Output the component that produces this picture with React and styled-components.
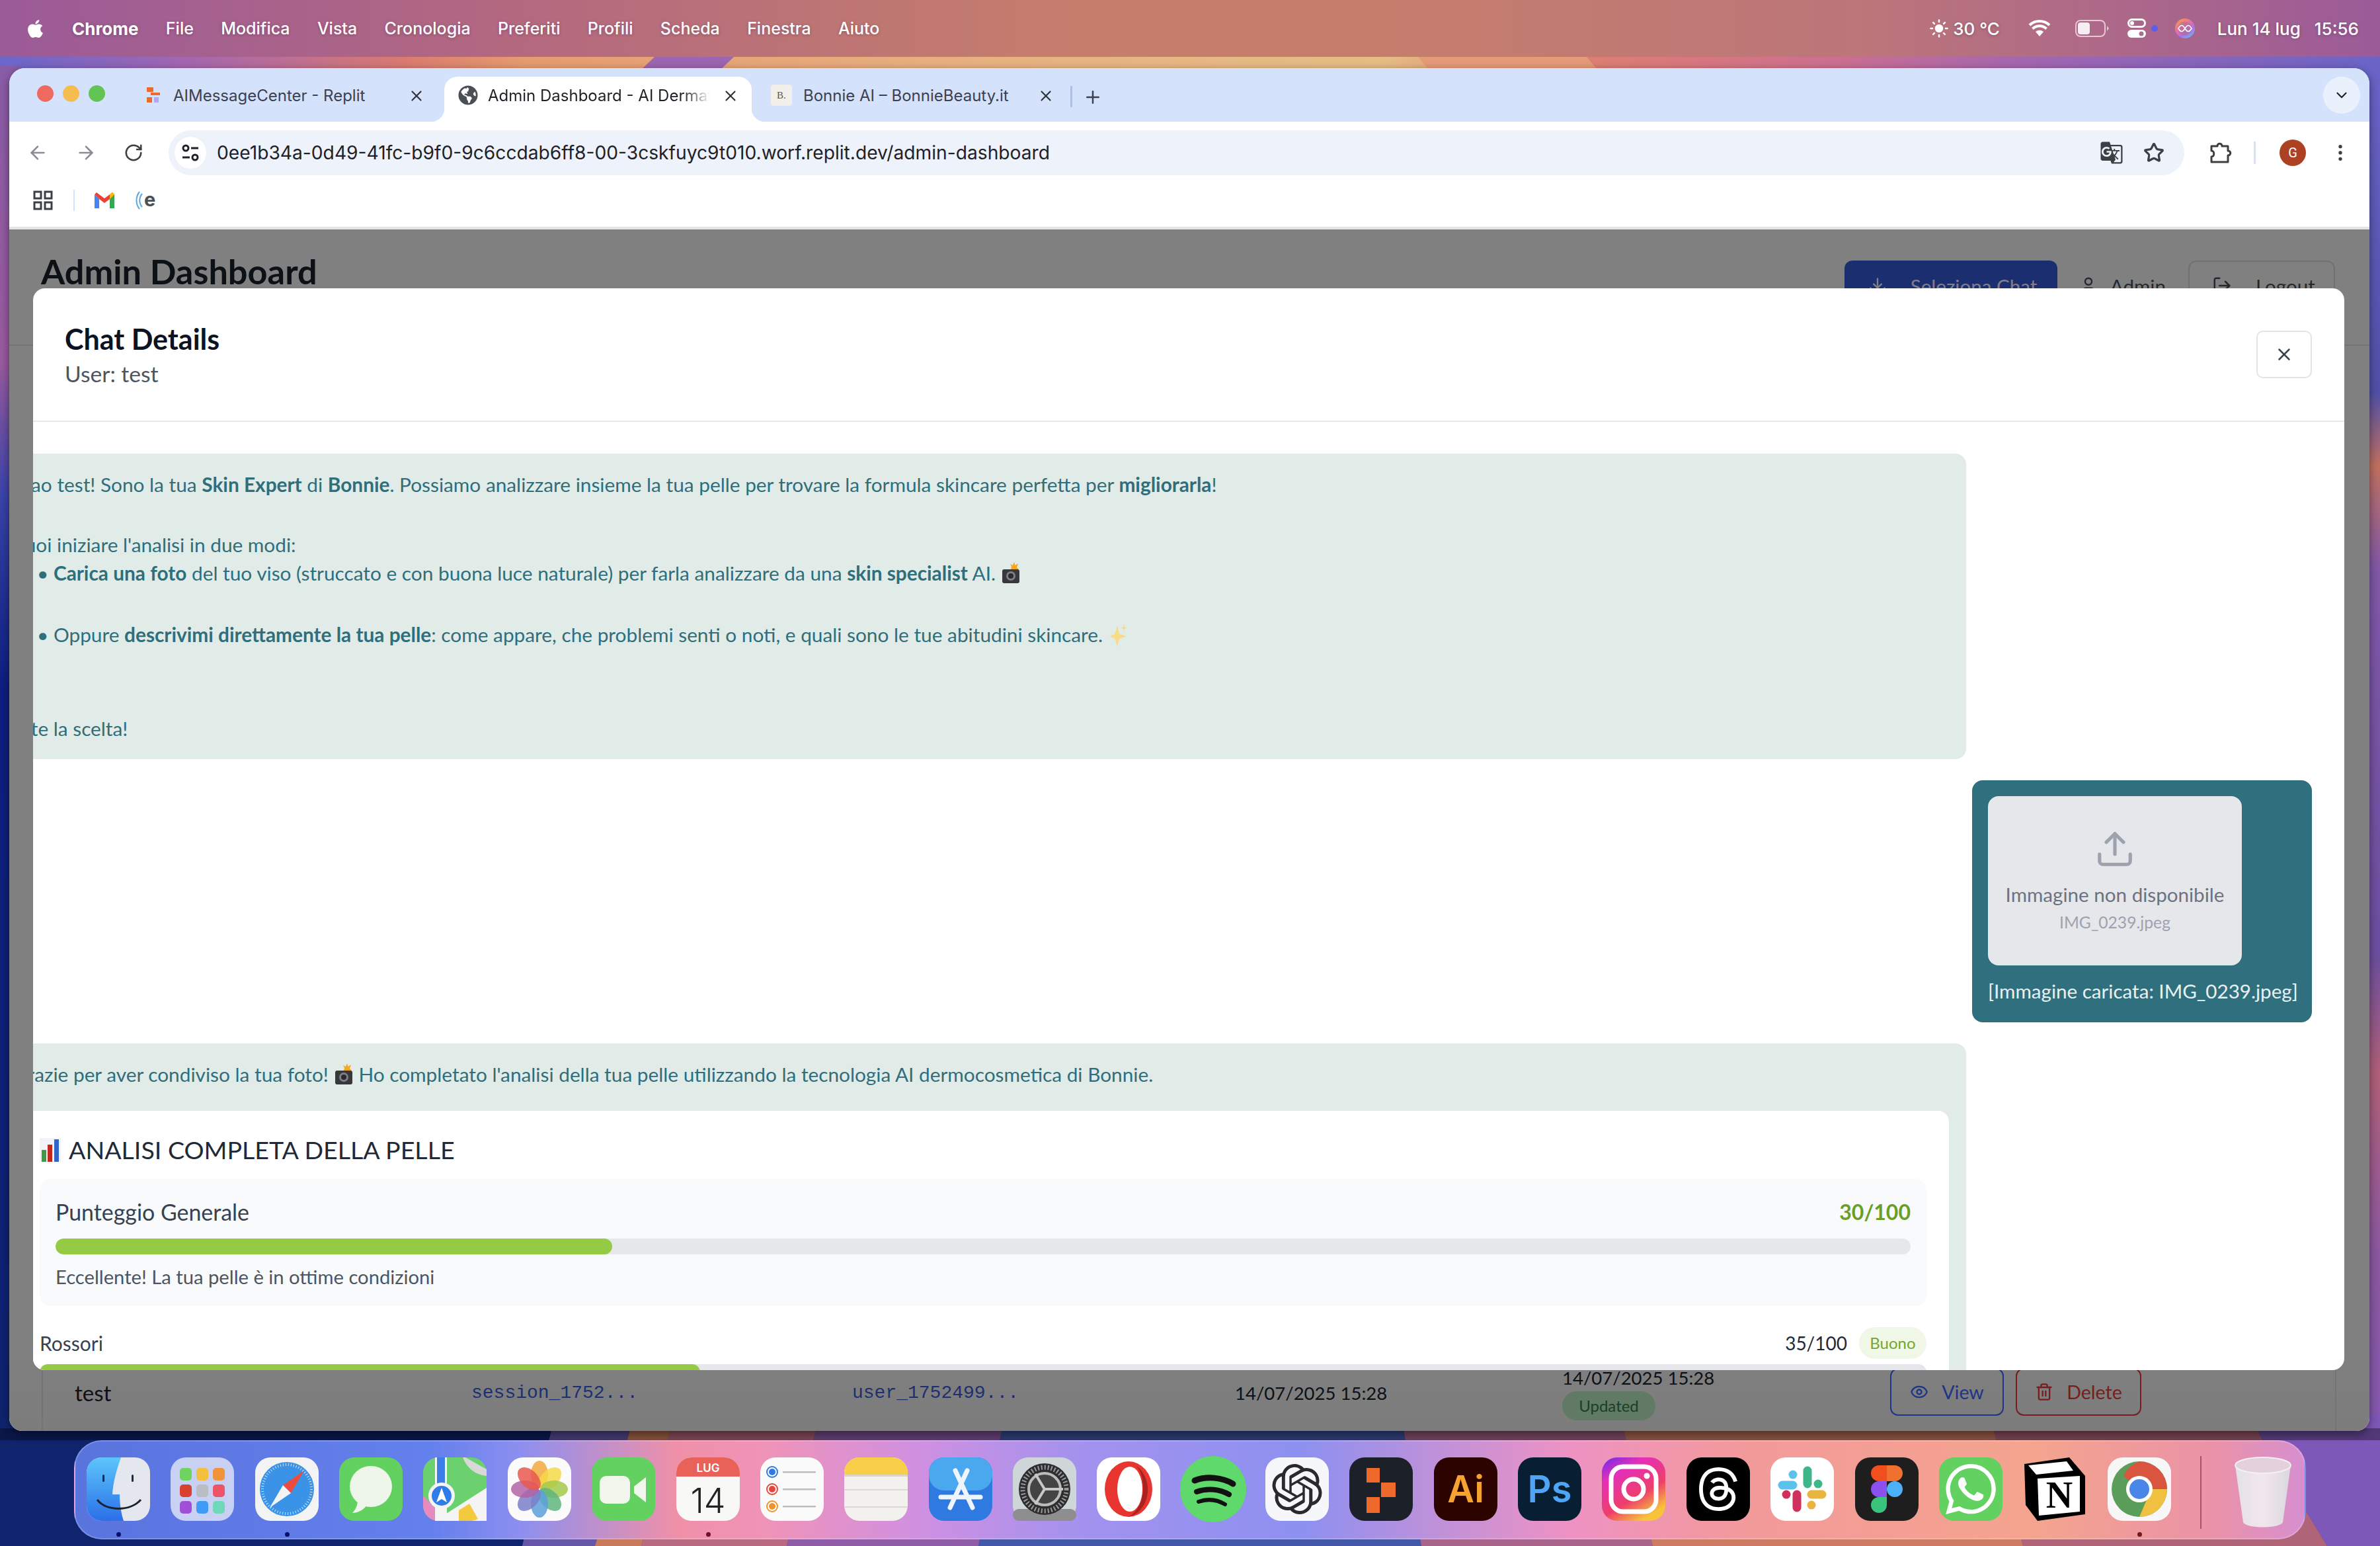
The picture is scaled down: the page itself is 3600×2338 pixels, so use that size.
import React from "react";
import styled, { createGlobalStyle } from "styled-components";
import {
  ArrowLeft, ArrowRight, RotateCw, Star, MoreVertical, ChevronDown, Plus, X, Upload,
  Download, User, LogOut, Eye, Trash2, Sun,
} from "lucide-react";
import { FaApple, FaGlobeAmericas } from "react-icons/fa";
import { MdGTranslate } from "react-icons/md";
import { SiOpenai, SiThreads, SiWhatsapp } from "react-icons/si";

const UI = '"Inter", "Liberation Sans", sans-serif';
const APP = '"Lato", "Noto Sans", sans-serif';

const Global = createGlobalStyle`
  html, body { margin: 0; padding: 0; width: 3600px; height: 2338px; overflow: hidden; }
  * { box-sizing: border-box; }
`;

const Desktop = styled.div`
  position: relative;
  width: 3600px;
  height: 2338px;
  overflow: hidden;
  display: flex;
  flex-direction: column;
  font-family: ${APP};
`;
const Wallpaper = styled.svg`
  position: absolute;
  left: 0;
  top: 0;
`;

/* menu bar */
const MenuBar = styled.div`
  position: relative;
  height: 86px;
  flex: none;
  display: flex;
  align-items: center;
  padding: 0 32px 0 38px;
  color: #fff;
  font-family: ${UI};
  font-size: 25px;
  font-weight: 500;
  background: linear-gradient(90deg, #9b5b98 0%, #b4697f 22%, #c57e6c 45%, #c57e6c 58%, #bd7679 78%, #9b5b98 100%);
  text-shadow: 0 1px 4px rgba(60, 20, 60, 0.35);
`;
const MenuItems = styled.div`
  display: flex;
  align-items: center;
  gap: 41.3px;
  margin-left: 40px;
`;
const MenuLabel = styled.span`
  font-weight: ${(p) => (p.$bold ? 700 : 500)};
  font-size: ${(p) => (p.$bold ? 26 : 25)}px;
`;
const StatusArea = styled.div`
  margin-left: auto;
  display: flex;
  align-items: center;
  font-size: 26px;
`;
const StatusText = styled.span`
  margin-left: ${(p) => p.$ml || 0}px;
`;
const StatusIcon = styled.svg`
  display: block;
  margin-left: ${(p) => p.$ml || 0}px;
`;

/* browser window */
const Browser = styled.div`
  position: relative;
  flex: none;
  width: 3570px;
  height: 2061px;
  margin: 17px 0 0 14px;
  border-radius: 24px 24px 20px 20px;
  overflow: hidden;
  display: flex;
  flex-direction: column;
  background: #fff;
  box-shadow: 0 4px 14px rgba(0, 0, 0, 0.45);
`;
const TabStrip = styled.div`
  height: 81px;
  flex: none;
  display: flex;
  align-items: flex-end;
  background: #d5e2fb;
  padding-left: 42px;
  font-family: ${UI};
  font-size: 24px;
  color: #3b4150;
`;
const Light = styled.span`
  width: 25px;
  height: 25px;
  border-radius: 50%;
  margin-right: 14px;
  align-self: center;
  margin-top: -4px;
  background: ${(p) => p.$c};
`;
const Tab = styled.div`
  position: relative;
  display: flex;
  align-items: center;
  height: 68px;
  width: ${(p) => p.$w}px;
  margin-left: ${(p) => p.$ml || 0}px;
  padding: 0 0 12px ${(p) => p.$pl}px;
  border-radius: 20px 20px 0 0;
  background: ${(p) => (p.$active ? "#fff" : "transparent")};
  color: ${(p) => (p.$active ? "#1f2127" : "#3b4150")};
  ${(p) =>
    p.$active &&
    `
    &::before, &::after {
      content: "";
      position: absolute;
      bottom: 0;
      width: 20px;
      height: 20px;
    }
    &::before { left: -20px; background: radial-gradient(circle at 0 0, transparent 20px, #fff 20.5px); }
    &::after { right: -20px; background: radial-gradient(circle at 100% 0, transparent 20px, #fff 20.5px); }
  `}
`;
const TabTitle = styled.span`
  margin-left: ${(p) => p.$ml}px;
  width: ${(p) => p.$w}px;
  white-space: nowrap;
  overflow: hidden;
  ${(p) => p.$fade && "-webkit-mask-image: linear-gradient(90deg, #000 88%, transparent 100%);"}
`;
const TabClose = styled.span`
  position: absolute;
  right: ${(p) => p.$r}px;
  top: 16px;
  display: flex;
  color: #2f323a;
`;
const TabSep = styled.span`
  width: 3px;
  height: 32px;
  background: #a9c0ec;
  margin: 0 0 22px 8px;
`;
const NewTab = styled.span`
  display: flex;
  margin: 0 0 22px 16px;
  color: #3b4150;
`;
const TabMenu = styled.span`
  margin: 0 14px 12px auto;
  width: 56px;
  height: 56px;
  border-radius: 50%;
  background: #ebf1fc;
  display: flex;
  align-items: center;
  justify-content: center;
  color: #1f2127;
`;
const FaviconB = styled.span`
  width: 32px;
  height: 32px;
  border-radius: 4px;
  background: #f3f0ec;
  display: flex;
  align-items: center;
  justify-content: center;
  font-family: "Liberation Serif", serif;
  font-size: 15px;
  color: #555;
`;
const Toolbar = styled.div`
  height: 81px;
  flex: none;
  display: flex;
  align-items: center;
  background: #fff;
  padding: 12px 0 0 23px;
  color: #6c6f75;
`;
const NavBtn = styled.span`
  display: flex;
  width: 40px;
  margin-right: ${(p) => p.$mr}px;
  justify-content: center;
  color: ${(p) => p.$c || "#8a8d92"};
`;
const Omnibox = styled.div`
  width: 3049px;
  height: 68px;
  border-radius: 34px;
  background: #edf2fb;
  display: flex;
  align-items: center;
  padding: 0 30px 0 9px;
  font-family: ${UI};
  font-size: 28.2px;
  color: #1f2127;
`;
const SiteInfo = styled.span`
  width: 48px;
  height: 48px;
  border-radius: 50%;
  background: #fff;
  display: flex;
  align-items: center;
  justify-content: center;
  margin-right: 16px;
  flex: none;
`;
const Url = styled.span`
  flex: 1;
  white-space: nowrap;
`;
const OmniIcon = styled.span`
  display: flex;
  margin-left: ${(p) => p.$ml}px;
  color: #3c4043;
`;
const ToolEnd = styled.div`
  display: flex;
  align-items: center;
  color: #3c4043;
`;
const ToolSep = styled.span`
  width: 3px;
  height: 34px;
  background: #d5e2fb;
  margin: 0 36px 0 33px;
`;
const Avatar = styled.span`
  width: 40px;
  height: 40px;
  border-radius: 50%;
  background: #ad4123;
  color: #fff;
  font-family: "Roboto", sans-serif;
  font-size: 20px;
  display: flex;
  align-items: center;
  justify-content: center;
`;
const Kebab = styled.span`
  display: flex;
  margin-left: 36px;
`;
const Bookmarks = styled.div`
  height: 82px;
  flex: none;
  display: flex;
  align-items: center;
  padding: 0 0 2px 36px;
  background: #fff;
  border-bottom: 4px solid #e4e4e4;
`;
const BookmarkSep = styled.span`
  width: 2px;
  height: 32px;
  background: #d5e2fb;
  margin: 0 30px 0 31px;
`;
const BookmarkIcon = styled.svg`
  display: block;
  margin-left: ${(p) => p.$ml || 0}px;
`;

/* dimmed page */
const Page = styled.div`
  flex: 1;
  min-height: 0;
  display: flex;
  flex-direction: column;
  background: linear-gradient(180deg, #808080 0%, #808080 93%, #7b7c7b 100%);
`;
const PageHeader = styled.div`
  height: 176px;
  flex: none;
  display: flex;
  align-items: flex-start;
  padding: 31px 52px 0 48px;
  border-bottom: 2px solid #747474;
`;
const PageTitle = styled.h1`
  margin: 0;
  font-size: 52.3px;
  line-height: 64px;
  font-weight: 700;
  color: #0c1017;
`;
const HeaderActions = styled.div`
  margin: 16px 0 0 auto;
  display: flex;
  align-items: flex-start;
  font-size: 29.6px;
`;
const SelectChat = styled.div`
  width: 322px;
  height: 76px;
  border-radius: 12px;
  background: #1b2f70;
  color: #80808a;
  display: flex;
  align-items: center;
  padding-left: 36px;
  gap: 36px;
`;
const AdminLabel = styled.div`
  display: flex;
  align-items: center;
  height: 76px;
  gap: 18px;
  margin: 0 34px 0 32px;
  color: #25282e;
`;
const LogoutBtn = styled.div`
  width: 222px;
  height: 76px;
  border-radius: 12px;
  border: 2px solid #6f7072;
  display: flex;
  align-items: center;
  padding-left: 34px;
  gap: 36px;
  color: #25282e;
`;
const TableFrame = styled.div`
  margin: auto 50px 0 49px;
  height: 95px;
  border: solid #747474;
  border-width: 0 2px;
  display: grid;
  grid-template-columns: 600px 576px 579px 495px 496px 1fr;
  padding-left: 48px;
  align-items: start;
`;
const Username = styled.div`
  font-size: 33px;
  line-height: 74px;
  color: #0c1017;
`;
const Mono = styled.div`
  font-family: "Liberation Mono", monospace;
  font-size: 28px;
  line-height: 76px;
  color: #1d2f70;
`;
const DateCell = styled.div`
  font-size: 27.5px;
  line-height: 76px;
  color: #0c1017;
`;
const StatusCell = styled.div`
  margin-top: -5px;
  font-size: 27.5px;
  line-height: 40px;
  color: #0c1017;
`;
const UpdatedBadge = styled.span`
  display: block;
  width: 141px;
  height: 44px;
  border-radius: 22px;
  background: #607a66;
  color: #1b3e26;
  font-size: 24px;
  line-height: 44px;
  text-align: center;
`;
const RowActions = styled.div`
  display: flex;
  gap: 18px;
`;
const RowBtn = styled.div`
  width: ${(p) => p.$w}px;
  height: 72px;
  border: 2px solid ${(p) => p.$c};
  border-radius: 12px;
  color: ${(p) => p.$c};
  display: flex;
  align-items: center;
  justify-content: center;
  gap: 20px;
  font-size: 28.6px;
`;

/* modal */
const Modal = styled.div`
  position: absolute;
  left: 36px;
  top: 333px;
  width: 3496px;
  height: 1636px;
  border-radius: 18px;
  overflow: hidden;
  background: #fff;
  display: flex;
  flex-direction: column;
`;
const ModalHeader = styled.div`
  height: 202px;
  flex: none;
  display: flex;
  align-items: flex-start;
  justify-content: space-between;
  padding: 50px 49px 0 48px;
  border-bottom: 2px solid #e5e7eb;
`;
const ModalTitle = styled.h2`
  margin: 0;
  font-size: 43px;
  line-height: 54px;
  font-weight: 700;
  color: #0c1322;
`;
const ModalSub = styled.div`
  margin-top: 3px;
  font-size: 33.6px;
  line-height: 44px;
  color: #4b5563;
`;
const CloseBtn = styled.div`
  width: 84px;
  height: 72px;
  margin-top: 14px;
  border: 2px solid #e2e4e9;
  border-radius: 10px;
  display: flex;
  align-items: center;
  justify-content: center;
  color: #3c4350;
`;
const Messages = styled.div`
  flex: 1;
  min-height: 0;
  overflow: hidden;
  padding: 48px 49px 0 0;
  display: flex;
  flex-direction: column;
  gap: 32px;
`;
const BotBubble = styled.div`
  flex: none;
  width: 2978px;
  margin-left: -54px;
  height: ${(p) => p.$h || "auto"};
  padding: 26px 24px 0;
  border-radius: 16px;
  background: #e1ebe7;
  color: #2f6e7c;
  font-size: 29.8px;
  line-height: 42px;
  white-space: nowrap;
  b { font-weight: 700; }
`;
const Line = styled.div`
  margin-top: ${(p) => p.$mt || 0}px;
  padding-left: ${(p) => p.$pl || 0}px;
  display: flex;
  align-items: center;
  white-space: pre;
`;
const Emoji = styled.svg`
  margin-left: 8px;
  flex: none;
`;
const UserBubble = styled.div`
  flex: none;
  align-self: flex-end;
  width: 514px;
  height: 366px;
  padding: 24px;
  border-radius: 16px;
  background: #30707e;
  color: #e8f1f3;
  font-size: 29.6px;
  white-space: nowrap;
`;
const MissingImage = styled.div`
  width: 384px;
  height: 256px;
  border-radius: 16px;
  background: #e5e7eb;
  display: flex;
  flex-direction: column;
  align-items: center;
  padding-top: 49px;
  color: #9ca3af;
`;
const MissingTitle = styled.div`
  margin-top: 18px;
  font-size: 29.6px;
  line-height: 40px;
  color: #6b7280;
`;
const MissingFile = styled.div`
  margin-top: 6px;
  font-size: 24.7px;
  line-height: 32px;
  color: #9ca3af;
`;
const Caption = styled.div`
  margin-top: 16px;
  line-height: 46px;
`;
const AnalysisCard = styled.div`
  margin: 34px 0 0 0;
  width: 2928px;
  padding: 34px 34px 0 40px;
  border-radius: 16px;
  background: #fff;
`;
const CardTitle = styled.div`
  display: flex;
  align-items: center;
  gap: 12px;
  font-size: 37.6px;
  line-height: 50px;
  color: #1f2937;
`;
const ScoreBox = styled.div`
  margin-top: 19px;
  height: 192px;
  padding: 26px 24px 24px;
  border-radius: 16px;
  background: #f9fafb;
`;
const ScoreHead = styled.div`
  display: flex;
  align-items: center;
  justify-content: space-between;
  height: 48px;
  font-size: 33.9px;
  color: #374151;
`;
const ScoreValue = styled.span`
  font-size: 32px;
  font-weight: 700;
  color: #6a9f23;
`;
const Track = styled.div`
  height: ${(p) => p.$h}px;
  margin-top: ${(p) => p.$mt}px;
  border-radius: ${(p) => p.$h / 2}px;
  background: #e5e7eb;
  overflow: hidden;
`;
const Fill = styled.div`
  height: 100%;
  border-radius: inherit;
  background: #95cb44;
`;
const ScoreNote = styled.div`
  margin-top: 14px;
  font-size: 29.2px;
  line-height: 40px;
  color: #4b5563;
`;
const MetricRow = styled.div`
  margin-top: 32px;
  height: 48px;
  display: flex;
  align-items: center;
  font-size: 30px;
  color: #374151;
`;
const MetricValue = styled.span`
  margin-left: auto;
  font-size: 28px;
  color: #1f2937;
`;
const MetricBadge = styled.span`
  margin-left: 18px;
  width: 102px;
  height: 48px;
  border-radius: 24px;
  background: #f1f7e7;
  color: #73a72f;
  font-size: 24px;
  line-height: 48px;
  text-align: center;
`;

/* dock */
const Dock = styled.div`
  flex: none;
  position: relative;
  width: 3376px;
  height: 150px;
  margin: 14px 0 0 112px;
  border-radius: 42px;
  padding: 22px 0 0 15px;
  display: flex;
  gap: 27.37px;
  border: 2px solid rgba(255, 255, 255, 0.2);
  background: linear-gradient(90deg, #5a74de 0%, #6480ec 16%, #8d8fef 20%, #f090a8 27%, #ef93b8 31%, #cf90e2 38%, #a392ee 45%, #8d90f0 55%, #ee92c4 67%, #f29a9a 75%, #f4a48e 88%, #ea92a8 96%, #d68fd0 100%);
`;
const DockItem = styled.div`
  position: relative;
  width: 100px;
  height: 100px;
  flex: none;
  &::after {
    content: "";
    display: ${(p) => (p.$running ? "block" : "none")};
    position: absolute;
    left: 47px;
    top: 115px;
    width: 7px;
    height: 7px;
    border-radius: 50%;
    background: ${(p) => p.$dot || "#0a0f6e"};
  }
`;
const DockSep = styled.span`
  width: 2px;
  height: 110px;
  margin: 0 16px 0 15px;
  background: rgba(120, 40, 60, 0.6);
`;

const Squircle = ({ fill, children }) => (
  <svg width="100" height="100" viewBox="0 0 100 100">
    <rect x="2" y="2" width="96" height="96" rx="23" fill={fill} />
    {children}
  </svg>
);

const Finder = () => (
  <Squircle fill="#e4e8ee">
    <defs>
      <linearGradient id="fnd" x1="0" y1="0" x2="0" y2="1">
        <stop offset="0" stopColor="#5cc6fb" /><stop offset="1" stopColor="#2c6fe8" />
      </linearGradient>
    </defs>
    <path d="M25 2H54C47 22 42 40 41 58H52C52 72 54 86 58 98H25A23 23 0 0 1 2 75V25A23 23 0 0 1 25 2Z" fill="url(#fnd)" />
    <rect x="26" y="28" width="3" height="11" rx="1.5" fill="#1a2a44" />
    <rect x="70" y="28" width="3" height="11" rx="1.5" fill="#1a2a44" />
    <path d="M18 66C32 84 68 84 84 66" fill="none" stroke="#1a2230" strokeWidth="3" />
  </Squircle>
);
const Launchpad = () => {
  const tiles = ["#6fd45f", "#f5bf3e", "#f0933a", "#d8402f", "#b9bcc0", "#ee5468", "#a24fd8", "#3f9bf5", "#6fd8b8"];
  return (
    <Squircle fill="#c8d0f4">
      {tiles.map((c, i) => (
        <rect key={c} x={16 + (i % 3) * 25} y={18 + Math.floor(i / 3) * 25} width="18" height="19" rx="5" fill={c} />
      ))}
    </Squircle>
  );
};
const Safari = () => (
  <Squircle fill="#f3f3f3">
    <circle cx="50" cy="50" r="41" fill="#3b93e8" />
    <circle cx="50" cy="50" r="37" fill="none" stroke="#cfe4f8" strokeWidth="4" strokeDasharray="1 3" />
    <path d="M76 22L56 56L44 44Z" fill="#ee4b3e" />
    <path d="M24 78L56 56L44 44Z" fill="#f4f4f4" />
  </Squircle>
);
const MessagesApp = () => (
  <Squircle fill="#62d160">
    <ellipse cx="50" cy="46" rx="32" ry="31" fill="#eef6ea" />
    <path d="M30 66C30 76 26 82 22 86C32 86 40 80 44 74Z" fill="#eef6ea" />
  </Squircle>
);
const Maps = () => (
  <Squircle fill="#6bd16e">
    <path d="M2 60L40 98H25A23 23 0 0 1 2 75Z" fill="#e88ac0" />
    <path d="M66 2L98 20V30C80 28 68 18 62 2Z" fill="#d8d8d8" />
    <path d="M20 98L98 48V98Z" fill="#f4f4f4" />
    <path d="M56 98H75A23 23 0 0 0 85 95L72 72L56 82Z" fill="#f5c93e" />
    <rect x="20" y="2" width="18" height="96" fill="#f4f4f4" />
    <rect x="23" y="2" width="12" height="50" fill="#3b7ee8" />
    <circle cx="30" cy="60" r="20" fill="#f4f4f4" />
    <circle cx="30" cy="60" r="15" fill="#2f7be8" />
    <path d="M30 48L38 70L30 65L22 70Z" fill="#fff" />
  </Squircle>
);
const Photos = () => {
  const petals = ["#f2a93c", "#f5d94a", "#a3c94b", "#5fb57c", "#5aa0d8", "#7b7fc8", "#b163a8", "#e8584f"];
  return (
    <Squircle fill="#fbfbfb">
      {petals.map((c, i) => (
        <ellipse key={c} cx="50" cy="28" rx="13" ry="21" fill={c} opacity="0.85" transform={`rotate(${i * 45} 50 50)`} />
      ))}
    </Squircle>
  );
};
const FaceTime = () => (
  <Squircle fill="#62d160">
    <rect x="14" y="30" width="46" height="42" rx="10" fill="#f0f6ec" />
    <path d="M66 46L84 32V70L66 56Z" fill="#f0f6ec" />
  </Squircle>
);
const Calendar = () => (
  <Squircle fill="#f8f8f6">
    <path d="M25 2H75A23 23 0 0 1 98 25V31H2V25A23 23 0 0 1 25 2Z" fill="#e8625a" />
    <text x="50" y="24" textAnchor="middle" fontFamily="Inter, sans-serif" fontSize="17" fontWeight="600" fill="#fff">LUG</text>
    <text x="50" y="86" textAnchor="middle" fontFamily="Inter, sans-serif" fontSize="52" fontWeight="300" fill="#222">14</text>
  </Squircle>
);
const Reminders = () => (
  <Squircle fill="#fafafa">
    {[["#2f78e8", 24], ["#e8443a", 50], ["#f0932b", 76]].map(([c, y]) => (
      <g key={c}>
        <circle cx="20" cy={y} r="8" fill="#fff" stroke={c} strokeWidth="2" />
        <circle cx="20" cy={y} r="5" fill={c} />
        <rect x="36" y={y - 1} width="50" height="2.5" fill="#bdbdbd" />
      </g>
    ))}
  </Squircle>
);
const Notes = () => (
  <Squircle fill="#f2f1ed">
    <path d="M25 2H75A23 23 0 0 1 98 25V28H2V25A23 23 0 0 1 25 2Z" fill="#f8cd48" />
    <rect x="2" y="28" width="96" height="3" fill="#d9d5c8" />
    <rect x="2" y="50" width="96" height="2" fill="#dad8d2" />
    <rect x="2" y="76" width="96" height="2" fill="#dad8d2" />
  </Squircle>
);
const AppStore = () => (
  <Squircle fill="#2f7ae0">
    <rect x="2" y="2" width="96" height="50" rx="23" fill="#4aa8ee" />
    <g stroke="#eef5fc" strokeWidth="7" strokeLinecap="round">
      <path d="M60 22L34 78" />
      <path d="M42 22L68 78" />
      <path d="M20 62H80" />
    </g>
  </Squircle>
);
const Settings = () => (
  <Squircle fill="#cfd6d8">
    <rect x="2" y="80" width="96" height="18" rx="9" fill="#8e8e8e" />
    <circle cx="50" cy="50" r="39" fill="#2e2e30" />
    <circle cx="50" cy="50" r="33" fill="none" stroke="#9a9a9a" strokeWidth="7" strokeDasharray="2 3" />
    <circle cx="50" cy="50" r="24" fill="#444" stroke="#bbb" strokeWidth="4" />
    <g stroke="#c8c8c8" strokeWidth="4">
      <path d="M50 50L78 50" /><path d="M50 50L36 27" /><path d="M50 50L36 73" />
    </g>
  </Squircle>
);
const Opera = () => (
  <Squircle fill="#fff">
    <ellipse cx="50" cy="50" rx="36" ry="42" fill="#e8352f" />
    <path d="M62 15A36 42 0 0 1 50 92C64 84 72 68 72 50C72 32 68 22 62 15Z" fill="#a82320" />
    <ellipse cx="52" cy="50" rx="19" ry="34" fill="#fff" />
  </Squircle>
);
const Spotify = () => (
  <svg width="100" height="100" viewBox="0 0 100 100">
    <circle cx="50" cy="50" r="50" fill="#5fd86c" />
    <g fill="none" stroke="#111" strokeLinecap="round">
      <path d="M22 37C40 30 64 32 80 42" strokeWidth="9" />
      <path d="M25 54C42 48 60 50 74 58" strokeWidth="8" />
      <path d="M28 69C42 64 56 66 68 73" strokeWidth="6" />
    </g>
  </svg>
);
const IconCenter = styled.div`
  width: 100px;
  height: 100px;
  display: flex;
  align-items: center;
  justify-content: center;
`;
const Centered = ({ fill, children }) => (
  <Squircle fill={fill}>
    <foreignObject x="0" y="0" width="100" height="100">
      <IconCenter>{children}</IconCenter>
    </foreignObject>
  </Squircle>
);
const Replit = () => (
  <Squircle fill="#1c2029">
    <path d="M28 18H48V40H28Z M50 40H72V62H50Z M28 62H48V86H28Z" fill="#ee6a2a" />
  </Squircle>
);
const Adobe = ({ bg, c, label }) => (
  <Squircle fill={bg}>
    <text x="50" y="70" textAnchor="middle" fontFamily="Inter, sans-serif" fontSize="56" fontWeight="600" fill={c}>{label}</text>
  </Squircle>
);
const Instagram = () => (
  <svg width="100" height="100" viewBox="0 0 100 100">
    <defs>
      <linearGradient id="ig" x1="0" y1="0" x2="0.6" y2="1">
        <stop offset="0" stopColor="#6a2cf0" /><stop offset="0.3" stopColor="#e52fb8" />
        <stop offset="0.7" stopColor="#ee3f6a" /><stop offset="1" stopColor="#f8c23a" />
      </linearGradient>
    </defs>
    <rect x="2" y="2" width="96" height="96" rx="23" fill="url(#ig)" />
    <rect x="16" y="16" width="68" height="68" rx="18" fill="none" stroke="#fff" strokeWidth="7" />
    <circle cx="50" cy="50" r="15" fill="none" stroke="#fff" strokeWidth="7" />
    <circle cx="70" cy="30" r="4.5" fill="#fff" />
  </svg>
);
const Slack = () => (
  <Squircle fill="#fff">
    <g strokeWidth="13" strokeLinecap="round" fill="none">
      <path d="M36 28V28.1M36 44H20" stroke="#5cc2ec" />
      <path d="M58 22V42M74 42V42.1" stroke="#3fb58a" />
      <path d="M64 58H80M64 74V74.1" stroke="#e8b640" />
      <path d="M42 58V78M26 58V58.1" stroke="#d0305c" />
    </g>
  </Squircle>
);
const Figma = () => (
  <Squircle fill="#1e1e1e">
    <path d="M50 14H38A12 12 0 0 0 38 38H50Z" fill="#f24e1e" />
    <path d="M50 14H62A12 12 0 0 1 62 38H50Z" fill="#f07030" />
    <path d="M50 38H38A12 12 0 0 0 38 62H50Z" fill="#8a50f0" />
    <circle cx="62" cy="50" r="12" fill="#4fb0fa" />
    <path d="M38 62H50V74A12 12 0 1 1 38 62Z" fill="#38c47c" />
  </Squircle>
);
const Notion = () => (
  <svg width="100" height="100" viewBox="0 0 100 100">
    <path d="M4 12L72 2L96 30V88L24 98L6 74Z" fill="#000" />
    <path d="M10 14L68 8L78 22L22 28Z M24 34L88 30V84L26 90Z" fill="#fff" />
    <text x="57" y="78" textAnchor="middle" fontFamily="Liberation Serif, serif" fontSize="56" fontWeight="700" fill="#000">N</text>
  </svg>
);
const Chrome = () => (
  <Squircle fill="#f7f7f7">
    <circle cx="50" cy="50" r="42" fill="#5a9e5a" />
    <path d="M50 8A42 42 0 0 1 92 50H50L26 30A42 42 0 0 1 50 8Z" fill="#d9553f" />
    <path d="M92 50A42 42 0 0 1 50 92L68 50Z" fill="#f0c040" />
    <circle cx="50" cy="50" r="20" fill="#fff" />
    <circle cx="50" cy="50" r="15" fill="#4a86e8" />
  </Squircle>
);
const TrashCan = () => (
  <svg width="100" height="112" viewBox="0 0 100 112">
    <defs>
      <linearGradient id="can" x1="0" y1="0" x2="1" y2="0">
        <stop offset="0" stopColor="#e2e2e6" /><stop offset="0.5" stopColor="#f2e6ec" /><stop offset="1" stopColor="#d8d8de" />
      </linearGradient>
    </defs>
    <path d="M8 14L20 100C24 110 76 110 80 100L92 14Z" fill="url(#can)" />
    <ellipse cx="50" cy="14" rx="42" ry="12" fill="#e4d0dc" stroke="#f4f0f2" strokeWidth="2" />
  </svg>
);

const dockApps = [
  ["finder", <Finder />, "#0a0f6e"],
  ["launchpad", <Launchpad />],
  ["safari", <Safari />, "#0a0f6e"],
  ["messages", <MessagesApp />],
  ["maps", <Maps />],
  ["photos", <Photos />],
  ["facetime", <FaceTime />],
  ["calendar", <Calendar />, "#6e1038"],
  ["reminders", <Reminders />],
  ["notes", <Notes />],
  ["appstore", <AppStore />],
  ["settings", <Settings />],
  ["opera", <Opera />],
  ["spotify", <Spotify />],
  ["chatgpt", <Centered fill="#f6f7fa"><SiOpenai size={76} color="#2a2a2e" /></Centered>],
  ["replit", <Replit />],
  ["ai", <Adobe bg="#2d0300" c="#f7a12e" label="Ai" />],
  ["ps", <Adobe bg="#071e33" c="#4ea4f5" label="Ps" />],
  ["instagram", <Instagram />],
  ["threads", <Centered fill="#000"><SiThreads size={66} color="#fff" /></Centered>],
  ["slack", <Slack />],
  ["figma", <Figma />],
  ["whatsapp", <Centered fill="#62d160"><SiWhatsapp size={76} color="#fff" /></Centered>],
  ["notion", <Notion />],
  ["chrome", <Chrome />, "#701a1a"],
];

const Camera = () => (
  <Emoji width="30" height="34" viewBox="0 0 30 34">
    <rect x="2" y="11" width="26" height="21" rx="3" fill="#38383c" />
    <circle cx="15" cy="21" r="7" fill="#7d7f85" />
    <circle cx="15" cy="21" r="4" fill="#2a2a2e" />
    <path d="M20 0L21.5 5L26 2L24 8L27 11H15L16 7L14 3L18 5Z" fill="#f5a623" />
  </Emoji>
);
const Sparkles = () => (
  <Emoji width="30" height="36" viewBox="0 0 26 30">
    <path d="M12 4L15 14L24 17L15 20L12 30L9 20L2 17L9 14Z" fill="#f6dc84" />
    <path d="M21 1L22 5L25 6L22 7L21 10L20 7L17 6L20 5Z" fill="#f6dc84" />
  </Emoji>
);
const BarsEmoji = () => (
  <svg width="32" height="36" viewBox="0 0 32 36">
    <rect width="32" height="36" fill="#f1f3f6" />
    <rect x="3" y="18" width="7" height="18" fill="#3d9a45" />
    <rect x="12" y="10" width="7" height="26" fill="#c3281f" />
    <rect x="22" y="2" width="7" height="34" fill="#2f66c8" />
  </svg>
);

const menuItems = ["File", "Modifica", "Vista", "Cronologia", "Preferiti", "Profili", "Scheda", "Finestra", "Aiuto"];

export default function App() {
  return (
    <Desktop>
      <Global />
      <Wallpaper width="3600" height="2338" viewBox="0 0 3600 2338">
        <defs>
          <linearGradient id="wallH" x1="0" y1="0" x2="1" y2="0">
            <stop offset="0" stopColor="#6a66cc" />
            <stop offset="0.08" stopColor="#a566b0" />
            <stop offset="0.17" stopColor="#da7a70" />
            <stop offset="0.22" stopColor="#e69b70" />
            <stop offset="0.4" stopColor="#e8b080" />
            <stop offset="0.58" stopColor="#e6bd85" />
            <stop offset="0.66" stopColor="#e07f70" />
            <stop offset="0.77" stopColor="#cd6f90" />
            <stop offset="0.85" stopColor="#a466b0" />
            <stop offset="1" stopColor="#6a64c8" />
          </linearGradient>
          <linearGradient id="wallV" x1="0" y1="0" x2="0" y2="1">
            <stop offset="0" stopColor="#8a5ca8" />
            <stop offset="0.2" stopColor="#9a5a9f" />
            <stop offset="0.29" stopColor="#3a44aa" />
            <stop offset="0.42" stopColor="#0d1f80" />
            <stop offset="1" stopColor="#10246e" />
          </linearGradient>
          <linearGradient id="wallR" x1="0" y1="0" x2="0" y2="1">
            <stop offset="0" stopColor="#6a64c8" />
            <stop offset="0.22" stopColor="#5050a8" />
            <stop offset="0.27" stopColor="#c07060" />
            <stop offset="0.34" stopColor="#8058a8" />
            <stop offset="0.6" stopColor="#6c4ea0" />
            <stop offset="0.68" stopColor="#b06078" />
            <stop offset="0.8" stopColor="#8c58a0" />
            <stop offset="1" stopColor="#7d58b8" />
          </linearGradient>
        </defs>
        <rect width="3600" height="340" fill="url(#wallH)" />
        <polygon points="990,86 1110,86 1085,110 965,110" fill="#9c66b0" />
        <polygon points="2145,86 2400,86 2420,110 2165,110" fill="#e59a78" />
        <rect x="0" y="100" width="30" height="2238" fill="url(#wallV)" />
        <rect x="3570" y="100" width="30" height="2238" fill="url(#wallR)" />
        <rect x="0" y="2140" width="3600" height="198" fill="#5c4b8a" />
        <polygon points="0,2140 840,2140 790,2338 0,2338" fill="#10246e" />
        <polygon points="840,2140 960,2140 900,2338 790,2338" fill="#6556a8" />
        <polygon points="960,2140 1020,2140 970,2338 900,2338" fill="#c87a5a" />
        <polygon points="1020,2140 1240,2140 1190,2338 970,2338" fill="#b86a80" />
        <polygon points="1240,2140 1520,2140 1480,2338 1190,2338" fill="#8f5ca8" />
        <polygon points="1520,2140 2120,2140 2150,2338 1480,2338" fill="#4358a8" />
        <polygon points="2120,2140 2450,2140 2500,2338 2150,2338" fill="#a8648a" />
        <polygon points="2450,2140 3010,2140 3060,2338 2500,2338" fill="#cc7a62" />
        <polygon points="3010,2140 3400,2140 3520,2338 3060,2338" fill="#b06478" />
        <polygon points="3400,2140 3600,2140 3600,2338 3520,2338" fill="#7d58b8" />
        <rect x="0" y="2160" width="3600" height="18" fill="#000" opacity="0.35" />
      </Wallpaper>

      <MenuBar>
        <FaApple size={31} />
        <MenuItems>
          <MenuLabel $bold>Chrome</MenuLabel>
          {menuItems.map((m) => <MenuLabel key={m}>{m}</MenuLabel>)}
        </MenuItems>
        <StatusArea>
          <Sun size={30} fill="#fff" />
          <StatusText $ml={6}>30 °C</StatusText>
          <StatusIcon $ml={43} width="34" height="26" viewBox="0 0 34 26">
            <path d="M17 25L11 18A9 9 0 0 1 23 18Z" fill="#fff" />
            <path d="M6.5 13.5A15 15 0 0 1 27.5 13.5M2 8A22 22 0 0 1 32 8" fill="none" stroke="#fff" strokeWidth="4" />
          </StatusIcon>
          <StatusIcon $ml={37} width="52" height="26" viewBox="0 0 52 26">
            <rect x="1" y="1" width="44" height="24" rx="7" fill="none" stroke="#e6c8d4" strokeWidth="2" />
            <rect x="4" y="4" width="18" height="18" rx="4" fill="#f6eef2" />
            <path d="M48 9L51 13L48 17Z" fill="#e6c8d4" />
          </StatusIcon>
          <StatusIcon $ml={27} width="46" height="30" viewBox="0 0 46 30">
            <rect x="1.5" y="1.5" width="25" height="11" rx="5.5" fill="none" stroke="#fff" strokeWidth="3" />
            <circle cx="7" cy="7" r="3" fill="#fff" />
            <rect x="0" y="17" width="28" height="12" rx="6" fill="#fff" />
            <circle cx="21" cy="23" r="3.5" fill="#a8708f" />
            <circle cx="41" cy="15" r="5" fill="#5b5ee8" />
          </StatusIcon>
          <StatusIcon $ml={26} width="30" height="30" viewBox="0 0 30 30">
            <defs>
              <linearGradient id="siri" x1="0.1" y1="0" x2="0.8" y2="1">
                <stop offset="0" stopColor="#f5a13c" /><stop offset="0.4" stopColor="#ea6fa0" />
                <stop offset="0.7" stopColor="#b070e8" /><stop offset="1" stopColor="#5cc0f0" />
              </linearGradient>
            </defs>
            <circle cx="15" cy="15" r="15" fill="url(#siri)" />
            <circle cx="15" cy="15" r="10.5" fill="#a8708f" opacity="0.55" />
            <path d="M5 15C9 8 12 10 15 15C18 20 21 22 25 15C21 8 18 10 15 15C12 20 9 22 5 15Z" fill="none" stroke="#fff" strokeWidth="1.6" />
          </StatusIcon>
          <StatusText $ml={34}>Lun 14 lug</StatusText>
          <StatusText $ml={21}>15:56</StatusText>
        </StatusArea>
      </MenuBar>

      <Browser>
        <TabStrip>
          <Light $c="#ee6a5f" />
          <Light $c="#f5bd4f" />
          <Light $c="#61c455" />
          <Tab $w={469} $ml={30} $pl={19}>
            <svg width="20" height="24" viewBox="0 0 20 24">
              <rect x="0" y="0" width="10" height="7" rx="1" fill="#ed6a2c" />
              <rect x="6" y="8" width="14" height="4" fill="#ed6a2c" />
              <rect x="0" y="15" width="8" height="8" fill="#ed6a2c" />
              <rect x="11" y="15" width="7" height="8" fill="#b4a6f5" />
            </svg>
            <TabTitle $ml={20} $w={310}>AIMessageCenter - Replit</TabTitle>
            <TabClose $r={29}><X size={26} /></TabClose>
          </Tab>
          <Tab $active $w={465} $pl={21}>
            <FaGlobeAmericas size={30} color="#4a4e55" />
            <TabTitle $fade $ml={15} $w={336}>Admin Dashboard - AI Dermatologist</TabTitle>
            <TabClose $r={19}><X size={26} /></TabClose>
          </Tab>
          <Tab $w={445} $ml={29} $pl={0}>
            <FaviconB>B.</FaviconB>
            <TabTitle $ml={17} $w={330}>Bonnie AI – BonnieBeauty.it</TabTitle>
            <TabClose $r={16}><X size={26} /></TabClose>
          </Tab>
          <TabSep />
          <NewTab><Plus size={30} /></NewTab>
          <TabMenu><ChevronDown size={26} /></TabMenu>
        </TabStrip>

        <Toolbar>
          <NavBtn $mr={33}><ArrowLeft size={32} /></NavBtn>
          <NavBtn $mr={32}><ArrowRight size={32} /></NavBtn>
          <NavBtn $mr={33} $c="#3c4043"><RotateCw size={30} /></NavBtn>
          <Omnibox>
            <SiteInfo>
              <svg width="28" height="28" viewBox="0 0 28 28" fill="none" stroke="#1f2127" strokeWidth="3">
                <circle cx="7" cy="7" r="4" /><path d="M15 7H26" />
                <circle cx="21" cy="21" r="4" /><path d="M2 21H13" />
              </svg>
            </SiteInfo>
            <Url>0ee1b34a-0d49-41fc-b9f0-9c6ccdab6ff8-00-3cskfuyc9t010.worf.replit.dev/admin-dashboard</Url>
            <OmniIcon $ml={0}><MdGTranslate size={36} /></OmniIcon>
            <OmniIcon $ml={30}><Star size={32} strokeWidth={2.4} /></OmniIcon>
          </Omnibox>
          <ToolEnd>
            <OmniIcon $ml={38}>
              <svg width="34" height="34" viewBox="0 0 34 34" fill="none" stroke="#3c4043" strokeWidth="3" strokeLinejoin="round">
                <path d="M3 7H12C12 2 19 2 19 7H28V14C33 14 33 21 28 21V31H3V23C8 23 8 14 3 14Z" />
              </svg>
            </OmniIcon>
            <ToolSep />
            <Avatar>G</Avatar>
            <Kebab><MoreVertical size={32} /></Kebab>
          </ToolEnd>
        </Toolbar>

        <Bookmarks>
          <svg width="30" height="30" viewBox="0 0 30 30" fill="none" stroke="#3c4043" strokeWidth="3">
            <rect x="2" y="2" width="10" height="10" /><rect x="18" y="2" width="10" height="10" />
            <rect x="2" y="18" width="10" height="10" /><rect x="18" y="18" width="10" height="10" />
          </svg>
          <BookmarkSep />
          <BookmarkIcon width="30" height="24" viewBox="0 0 30 24">
            <path d="M0 3V24H7V10Z" fill="#4285f4" />
            <path d="M30 3V24H23V10Z" fill="#34a853" />
            <path d="M0 3L3 0L15 9L27 0L30 3L23 10L15 16L7 10Z" fill="#ea4335" />
            <path d="M23 3L27 0L30 3L23 10Z" fill="#fbbc04" />
          </BookmarkIcon>
          <BookmarkIcon $ml={32} width="36" height="32" viewBox="0 0 36 32" fill="none" stroke="#5aa8dc" strokeWidth="2">
            <path d="M6 3C0 10 0 22 6 29M10 6C5 12 5 20 10 26" />
            <text x="13" y="25" fontFamily="Inter, sans-serif" fontSize="29" fontWeight="700" fill="#4a4e55" stroke="none">e</text>
          </BookmarkIcon>
        </Bookmarks>

        <Page>
          <PageHeader>
            <PageTitle>Admin Dashboard</PageTitle>
            <HeaderActions>
              <SelectChat><Download size={28} />Seleziona Chat</SelectChat>
              <AdminLabel><User size={30} />Admin</AdminLabel>
              <LogoutBtn><LogOut size={30} />Logout</LogoutBtn>
            </HeaderActions>
          </PageHeader>
          <TableFrame>
            <Username>test</Username>
            <Mono>session_1752...</Mono>
            <Mono>user_1752499...</Mono>
            <DateCell>14/07/2025 15:28</DateCell>
            <StatusCell>
              14/07/2025 15:28
              <UpdatedBadge>Updated</UpdatedBadge>
            </StatusCell>
            <RowActions>
              <RowBtn $w={172} $c="#1d3488"><Eye size={28} />View</RowBtn>
              <RowBtn $w={190} $c="#7a1c1c"><Trash2 size={28} />Delete</RowBtn>
            </RowActions>
          </TableFrame>
        </Page>

        <Modal>
          <ModalHeader>
            <div>
              <ModalTitle>Chat Details</ModalTitle>
              <ModalSub>User: test</ModalSub>
            </div>
            <CloseBtn><X size={30} /></CloseBtn>
          </ModalHeader>
          <Messages>
            <BotBubble $h="462px">
              <Line>Ciao test! Sono la tua <b>Skin Expert</b> di <b>Bonnie</b>. Possiamo analizzare insieme la tua pelle per trovare la formula skincare perfetta per <b>migliorarla</b>!</Line>
              <Line $mt={49}>Puoi iniziare l'analisi in due modi:</Line>
              <Line $pl={36} $mt={1}>• <b>Carica una foto</b> del tuo viso (struccato e con buona luce naturale) per farla analizzare da una <b>skin specialist</b> AI.<Camera /></Line>
              <Line $pl={36} $mt={51}>• Oppure <b>descrivimi direttamente la tua pelle</b>: come appare, che problemi senti o noti, e quali sono le tue abitudini skincare.<Sparkles /></Line>
              <Line $mt={100}>A te la scelta!</Line>
            </BotBubble>
            <UserBubble>
              <MissingImage>
                <Upload size={62} strokeWidth={2} />
                <MissingTitle>Immagine non disponibile</MissingTitle>
                <MissingFile>IMG_0239.jpeg</MissingFile>
              </MissingImage>
              <Caption>[Immagine caricata: IMG_0239.jpeg]</Caption>
            </UserBubble>
            <BotBubble>
              <Line>Grazie per aver condiviso la tua foto!<Camera /> Ho completato l'analisi della tua pelle utilizzando la tecnologia AI dermocosmetica di Bonnie.</Line>
              <AnalysisCard>
                <CardTitle><BarsEmoji />ANALISI COMPLETA DELLA PELLE</CardTitle>
                <ScoreBox>
                  <ScoreHead>Punteggio Generale<ScoreValue>30/100</ScoreValue></ScoreHead>
                  <Track $h={24} $mt={16}><Fill style={{ width: "30%" }} /></Track>
                  <ScoreNote>Eccellente! La tua pelle è in ottime condizioni</ScoreNote>
                </ScoreBox>
                <MetricRow>
                  Rossori
                  <MetricValue>35/100</MetricValue>
                  <MetricBadge>Buono</MetricBadge>
                </MetricRow>
                <Track $h={24} $mt={8}><Fill style={{ width: "35%" }} /></Track>
              </AnalysisCard>
            </BotBubble>
          </Messages>
        </Modal>
      </Browser>

      <Dock>
        {dockApps.map(([id, icon, dot]) => (
          <DockItem key={id} $running={!!dot} $dot={dot}>{icon}</DockItem>
        ))}
        <DockSep />
        <DockItem><TrashCan /></DockItem>
      </Dock>
    </Desktop>
  );
}
